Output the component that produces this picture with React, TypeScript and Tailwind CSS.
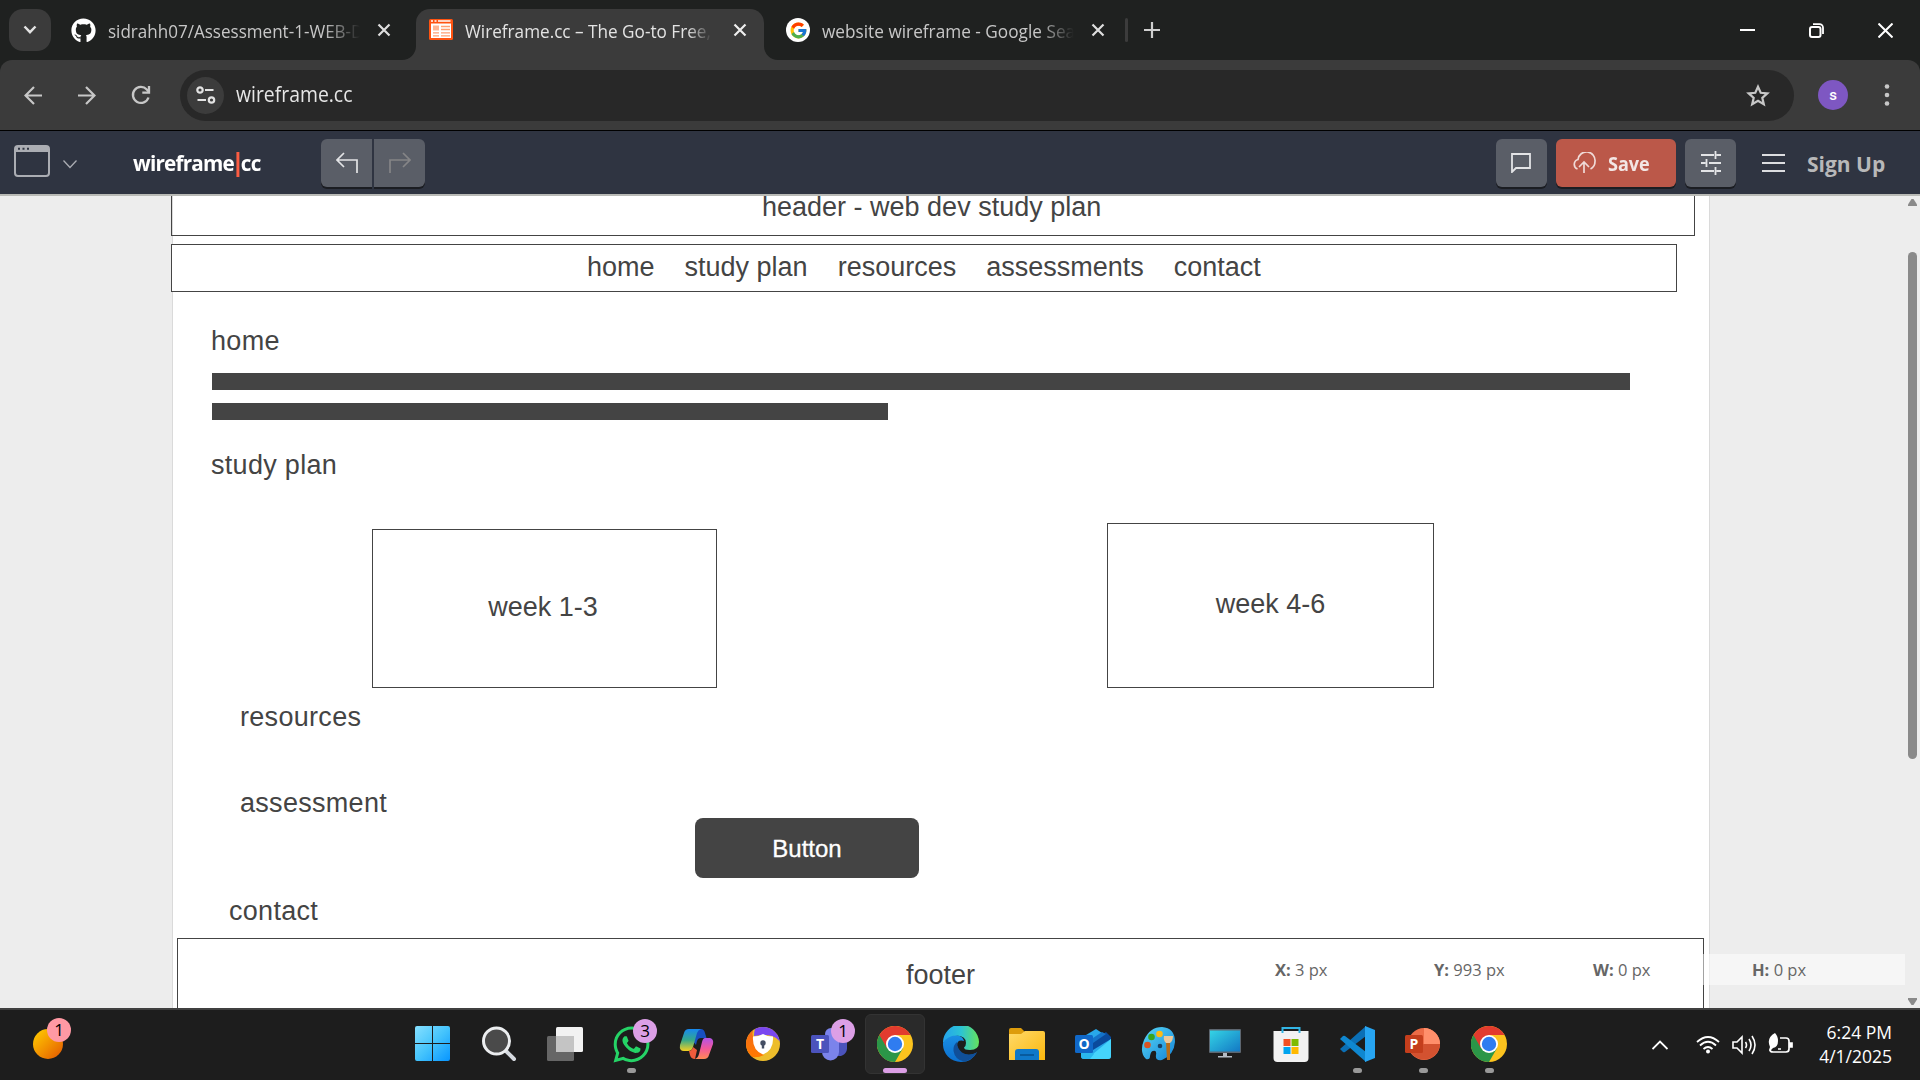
import React from "react";
import { FaGithub, FaWhatsapp } from "react-icons/fa";
import { FcGoogle } from "react-icons/fc";

const ui = "font-['Open_Sans','Noto_Sans',sans-serif]";

function TabClose({ c }: { c: string }) {
  return (
    <svg width="14" height="14" viewBox="0 0 14 14" stroke={c} strokeWidth="2.2">
      <path d="M1.5 1.5l11 11M12.5 1.5l-11 11" />
    </svg>
  );
}

function TabStrip() {
  return (
    <div className="relative flex h-[60px] items-start bg-[#1f2120]">
      <div className="mt-[9px] ml-[9px] flex h-[42px] w-[42px] items-center justify-center rounded-[14px] bg-[#3b3b3b]">
        <svg width="14" height="10" viewBox="0 0 14 10" fill="none" stroke="#e3e3e3" strokeWidth="2.4">
          <path d="M1.5 1.5L7 7.2l5.500-5.700" />
        </svg>
      </div>
      <div className="flex h-[60px] w-[365px] items-center pl-[20px]">
        <FaGithub size={25} color="#fff" />
        <div className="mt-[3px] ml-[12px] w-[252px] overflow-hidden text-[18px] whitespace-nowrap text-[#c7c7c7] [mask-image:linear-gradient(to_right,#000_86%,transparent)]">
          <span className="inline-block origin-left scale-x-[.947]">sidrahh07/Assessment-1-WEB-DEV</span>
        </div>
        <div className="ml-[17px]"><TabClose c="#dedede" /></div>
      </div>
      <div className="relative mt-[9px] flex h-[51px] w-[348px] items-center rounded-t-[14px] bg-[#3b3b3b] pb-[9px] pl-[13px]">
        <svg className="absolute bottom-0 -left-[14px]" width="14" height="14"><path d="M14 0v14H0A14 14 0 0 0 14 0" fill="#3b3b3b" /></svg>
        <svg className="absolute -right-[14px] bottom-0" width="14" height="14"><path d="M0 0v14h14A14 14 0 0 1 0 0" fill="#3b3b3b" /></svg>
        <svg width="24" height="22" viewBox="0 0 24 22">
          <rect width="24" height="21" rx="1.500" fill="#ff5310" />
          <path d="M2 2h2M5.500 2h2M9 2h12.500" stroke="#fff" strokeWidth="1.500" />
          <rect x="2" y="4.500" width="20" height="14.500" fill="#fff" />
          <rect x="4" y="6.500" width="6" height="5" fill="#ffb592" />
          <path d="M12 7.500h9M12 10.500h9M4 13.800h6M12 13.800h9M4 16.800h6M12 16.800h9" stroke="#ff9e72" strokeWidth="1.300" />
        </svg>
        <div className="mt-[3px] ml-[12px] w-[247px] overflow-hidden text-[18px] whitespace-nowrap text-[#e3e3e3] [mask-image:linear-gradient(to_right,#000_90%,transparent)]">
          <span className="inline-block origin-left scale-x-[.953]">Wireframe.cc – The Go-to Free, Online</span>
        </div>
        <div className="ml-[21px]"><TabClose c="#eee" /></div>
      </div>
      <div className="flex h-[60px] items-center pl-[22px]">
        <div className="flex h-[24px] w-[24px] items-center justify-center rounded-full bg-white"><FcGoogle size={19} /></div>
        <div className="mt-[3px] ml-[12px] w-[252px] overflow-hidden text-[18px] whitespace-nowrap text-[#c7c7c7] [mask-image:linear-gradient(to_right,#000_86%,transparent)]">
          <span className="inline-block origin-left scale-x-[.957]">website wireframe - Google Search</span>
        </div>
        <div className="ml-[17px]"><TabClose c="#dedede" /></div>
        <div className="ml-[20px] h-[24px] w-[3px] rounded bg-[#3c3c3c]" />
        <svg className="ml-[16px]" width="16" height="16" stroke="#cfcfcf" strokeWidth="2.200"><path d="M8 0v16M0 8h16" /></svg>
      </div>
      <div className="ml-auto flex h-[60px] items-center gap-[54px] pr-[27px]">
        <svg width="15" height="15" stroke="#fff" strokeWidth="2"><path d="M0 7h15" /></svg>
        <svg width="15" height="15" fill="none" stroke="#fff" strokeWidth="2"><rect x="1" y="4" width="10.500" height="10" rx="2" /><path d="M4 1.200h6.500a3.500 3.500 0 0 1 3.500 3.500V11" strokeWidth="1.800" /></svg>
        <svg width="15" height="15" stroke="#fff" strokeWidth="2"><path d="M.5.500l14 14M14.500.500l-14 14" /></svg>
      </div>
    </div>
  );
}

function Toolbar() {
  return (
    <div className="h-[70px] bg-[#1f2120]">
      <div className="flex h-[70px] items-center rounded-t-[12px] bg-[#3b3b3b]">
        <svg className="ml-[24px]" width="19" height="19" viewBox="0 0 19 19" fill="none" stroke="#c7c7c7" strokeWidth="2.200"><path d="M18 9.500H2M10 1L1.500 9.500 10 18" /></svg>
        <svg className="ml-[34px]" width="19" height="19" viewBox="0 0 19 19" fill="none" stroke="#c7c7c7" strokeWidth="2.200"><path d="M1 9.500h16M9 1l8.500 8.500L9 18" /></svg>
        <svg className="ml-[35px]" width="20" height="20" viewBox="0 0 20 20" fill="none" stroke="#c7c7c7" strokeWidth="2.300"><path d="M17.500 12.500A8 8 0 1 1 15.800 4.500L18 7" /><path d="M18 1v6.700h-6.700" /></svg>
        <div className="ml-[29px] flex h-[51px] w-[1614px] items-center rounded-full bg-[#282828] pl-[7px]">
          <div className="flex h-[37px] w-[37px] items-center justify-center rounded-full bg-[#3c3c3c]">
            <svg width="20" height="18" viewBox="0 0 20 18" fill="none" stroke="#e3e3e3" strokeWidth="2.200"><circle cx="4" cy="4" r="2.700" /><path d="M9 4h8.500M1.500 14h8.500" /><circle cx="15.500" cy="14" r="2.700" /></svg>
          </div>
          <span className="ml-[12px] origin-left scale-x-[.923] text-[21px] text-[#e6e6e6]">wireframe.cc</span>
          <svg className="mr-[24px] ml-auto" width="24" height="23" viewBox="0 0 24 23" fill="none" stroke="#c7c7c7" strokeWidth="2.200"><path d="M12 2.800l2.700 6 6.600.600-5 4.400 1.500 6.500L12 16.800l-5.800 3.500 1.500-6.500-5-4.400 6.600-.600z" /></svg>
        </div>
        <div className="ml-[24px] flex h-[30px] w-[30px] items-center justify-center rounded-full bg-[#7e57c2] font-[Roboto,sans-serif] text-[15px] font-medium text-white">s</div>
        <svg className="ml-[36px]" width="6" height="22" fill="#c7c7c7"><circle cx="3" cy="2.500" r="2.300" /><circle cx="3" cy="11" r="2.300" /><circle cx="3" cy="19.500" r="2.300" /></svg>
      </div>
    </div>
  );
}

const tool = "flex h-[48px] items-center justify-center bg-[#5a5e67] shadow-[0_2px_0_#1b1d22]";

function AppBar() {
  return (
    <div className="flex h-[64px] items-start border-t border-black bg-[#2f3441] pt-[8px]">
      <svg className="mt-[6px] ml-[14px]" width="36" height="32" viewBox="0 0 36 32" fill="none"><rect x="1" y="1" width="34" height="30" rx="3" stroke="#abadb3" strokeWidth="2" /><path d="M1 4q0-3 3-3h28q3 0 3 3v3H1z" fill="#abadb3" /><path d="M4 3.700h2M8.500 3.700h2M13 3.700h2" stroke="#2f3441" strokeWidth="2" /></svg>
      <svg className="mt-[21px] ml-[13px]" width="14" height="9" fill="none" stroke="#abadb3" strokeWidth="1.300"><path d="M.5.500L7 7.500 13.500.500" /></svg>
      <div className="ml-[56px] flex h-[48px] w-[188px] items-center pt-[2px] text-[21px] font-bold text-white">
        <span className="flex origin-left scale-x-[.985] items-center tracking-[-0.800px]">wireframe<i className="mx-[2px] h-[25px] w-[3px] bg-[#fb5c42]" />cc</span>
      </div>
      <div className={`${tool} w-[51px] rounded-l-[6px]`}>
        <svg width="22" height="22" fill="none" stroke="#e3e4e6" strokeWidth="1.700"><path d="M8 1L1 8l7 7M1 8h20v13" /></svg>
      </div>
      <div className={`${tool} ml-[2px] w-[51px] rounded-r-[6px]`}>
        <svg width="22" height="22" fill="none" stroke="#858587" strokeWidth="1.700"><path d="M14 1l7 7-7 7M21 8H1v13" /></svg>
      </div>
      <div className="ml-auto flex">
        <div className={`${tool} w-[51px] rounded-[6px]`}>
          <svg className="-ml-[1px]" width="20" height="20" fill="none" stroke="#e3e4e6" strokeWidth="1.800"><path d="M1 1h18v14H5l-4 4z" /></svg>
        </div>
        <div className="ml-[9px] flex h-[48px] w-[120px] items-center rounded-[6px] bg-[#bb5849] pl-[16px] text-[19px] font-bold text-[#f3e6e4] shadow-[0_2px_0_#1b1d22]">
          <svg width="25" height="22" fill="none" stroke="#f0dad7" strokeWidth="1.700"><path d="M5.500 17A5 5 0 0 1 6 7.500 8.500 8.500 0 0 1 23 9.500c0 3-1.500 6-4.500 7.500M12 21V10.500M7 15l5-5 5 5" /></svg>
          <span className="mt-[2px] ml-[11px] origin-left scale-x-[.95]">Save</span>
        </div>
        <div className={`${tool} ml-[9px] w-[51px] rounded-[6px]`}>
          <svg width="20" height="24" fill="none" stroke="#e3e4e6" strokeWidth="1.800"><path d="M0 4h13M15.500 4H20M14.500 0v8M0 12h4.500M8 12h12M5.500 8v8M0 20h13M15.500 20H20M14.500 16v8" /></svg>
        </div>
        <svg className="mt-[14px] ml-[26px]" width="23" height="20" stroke="#dcdde0" strokeWidth="2"><path d="M0 2h23M0 10h23M0 18h23" /></svg>
        <span className="mt-[10px] mr-[33px] ml-[22px] w-[80px] origin-left text-[21px] font-bold whitespace-nowrap text-[#b8b8b9]">Sign Up</span>
      </div>
    </div>
  );
}

function Label({ at, children }: { at: string; children: string }) {
  return <div className={`absolute text-[27px] leading-[30px] whitespace-nowrap ${at}`}>{children}</div>;
}

function Canvas() {
  return (
    <div className="relative h-[814px] overflow-hidden bg-[#ededed] font-['Liberation_Sans',Arial,sans-serif] text-[#444]">
      <div className="absolute top-0 left-[172px] h-full w-[1538px] border-x border-[#dadada] bg-white" />
      <div className="absolute -top-[10px] left-[171px] h-[52px] w-[1524px] border border-[#444]" />
      <div className="absolute top-[50px] left-[171px] h-[48px] w-[1506px] border border-[#444] bg-white" />
      <Label at="top-[-2px] left-[762px]">header - web dev study plan</Label>
      <div className="absolute top-[58px] left-[587px] flex gap-[30px] text-[27px] leading-[30px] whitespace-nowrap">
        <span>home</span><span>study plan</span><span>resources</span><span>assessments</span><span>contact</span>
      </div>
      <Label at="top-[132px] left-[211px] tracking-[.3px]">home</Label>
      <div className="absolute top-[179px] left-[212px] h-[17px] w-[1418px] bg-[#444]" />
      <div className="absolute top-[209px] left-[212px] h-[17px] w-[676px] bg-[#444]" />
      <Label at="top-[256px] left-[211px] tracking-[.3px]">study plan</Label>
      <div className="absolute top-[335px] left-[372px] flex h-[159px] w-[345px] items-center justify-center border border-[#444] pr-[3px] pb-[2px] text-[27px]">week 1-3</div>
      <div className="absolute top-[329px] left-[1107px] flex h-[165px] w-[327px] items-center justify-center border border-[#444] pb-[2px] text-[27px]">week 4-6</div>
      <Label at="top-[508px] left-[240px] tracking-[.3px]">resources</Label>
      <Label at="top-[594px] left-[240px] tracking-[.3px]">assessment</Label>
      <div className="absolute top-[624px] left-[695px] flex h-[60px] w-[224px] items-center justify-center rounded-[8px] bg-[#444] pt-[2px] text-[24px] text-white [-webkit-text-stroke:.3px_#fff]">Button</div>
      <Label at="top-[702px] left-[229px] tracking-[.3px]">contact</Label>
      <div className="absolute top-[744px] left-[177px] h-[100px] w-[1527px] border border-[#444] bg-white" />
      <Label at="top-[766px] left-[906px]">footer</Label>
      <div className={`absolute top-[760px] left-[1256px] flex h-[31px] w-[649px] items-center bg-white/50 pt-[2px] pl-[1px] text-[16.500px] text-[#666] ${ui}`}>
        <span className="w-[159px] pl-[18px]"><b>X:</b> 3 px</span>
        <span className="w-[159px] pl-[18px]"><b>Y:</b> 993 px</span>
        <span className="w-[159px] pl-[18px]"><b>W:</b> 0 px</span>
        <span className="pl-[18px]"><b>H:</b> 0 px</span>
      </div>
      <div className="absolute top-0 left-0 h-[2px] w-full bg-[#b9bab6]" />
      <svg className="absolute top-[5px] right-[3px]" width="9" height="7" fill="#8a8a8a"><path d="M0 7V5.500L3.500 0h2L9 5.500V7z" /></svg>
      <div className="absolute top-[58px] right-[3px] h-[507px] w-[9px] rounded-full bg-[#8a8a8a]" />
      <svg className="absolute right-[3px] bottom-[3px]" width="9" height="7" fill="#8a8a8a"><path d="M0 0v1.500L3.500 7h2L9 1.500V0z" /></svg>
    </div>
  );
}

function Chrome() {
  return (
    <svg width="36" height="36" viewBox="0 0 36 36">
      <circle cx="18" cy="18" r="18" fill="#fcc31e" />
      <path d="M18 18L2.400 9A18 18 0 0 0 18 36l7.800-13.500z" fill="#2b9648" />
      <path d="M2.400 9A18 18 0 0 1 33.600 9H18l-7.800 13.500z" fill="#e23b2e" />
      <circle cx="18" cy="18" r="9" fill="#fff" /><circle cx="18" cy="18" r="7.200" fill="#2f7cf0" />
    </svg>
  );
}

function Badge({ n, bg, at }: { n: string; bg: string; at: string }) {
  return <div className={`absolute flex h-[24px] w-[24px] items-center justify-center rounded-full text-[17px] text-black ${bg} ${at}`}>{n}</div>;
}

const icons: React.ReactNode[] = [
  <svg width="36" height="36"><defs><linearGradient id="win" x2="1" y2="1"><stop stopColor="#86e0ff" /><stop offset=".5" stopColor="#45c4fc" /><stop offset="1" stopColor="#0795ff" /></linearGradient></defs><path d="M2 0h15v17H0V2q0-2 2-2zM18 0h15q2 0 2 2v15H18zM0 18h17v17H2q-2 0-2-2zM18 18h17v15q0 2-2 2H18z" fill="url(#win)" /></svg>,
  <svg width="36" height="36" fill="none"><path d="M25 25l8 8" stroke="#d5d9df" strokeWidth="4" strokeLinecap="round" /><circle cx="15.500" cy="15" r="13" fill="#4a4a4a" stroke="#eceef0" strokeWidth="3" /></svg>,
  <svg width="36" height="36"><rect y="10" width="27" height="25" rx="1.500" fill="#666" /><rect x="9" y="1" width="27" height="25" rx="1.500" fill="#f2f2f2" /><path d="M9 10h18v16H9z" fill="#c4c4c4" /></svg>,
  <FaWhatsapp size={41} color="#25d366" />,
  <svg width="36" height="36" viewBox="0 0 36 36"><defs><linearGradient id="cpA" x2="0" y2="1"><stop stopColor="#1788f0" /><stop offset=".5" stopColor="#35a98a" /><stop offset="1" stopColor="#f5cf21" /></linearGradient><linearGradient id="cpB" x2="0" y2="1"><stop stopColor="#b354e8" /><stop offset=".5" stopColor="#f2589b" /><stop offset="1" stopColor="#ff8a54" /></linearGradient></defs><path d="M22 3q3 0 4 4l1.500 5H22q-3 0-4 3l-1 4-5-6 3-10z" fill="#174fc1" /><path d="M10 3h12q-3 1-4 4l-4 14q-1 4-5 4H5q-5 0-4-6L5 7q1-4 5-4z" fill="url(#cpA)" /><path d="M10 25q3 0 4-4l4 3-2 9q-4 0-5-4z" fill="#ef5b3c" /><path d="M26 12h5q4 1 3 6l-4 11q-1 4-5 4h-9q3-1 4-5l3-12q1-4 3-4z" fill="url(#cpB)" /></svg>,
  <svg width="36" height="36" viewBox="0 0 36 36"><defs><linearGradient id="orb" x2="0" y2="1"><stop stopColor="#f36a1c" /><stop offset="1" stopColor="#ff7a00" /></linearGradient><clipPath id="orbClip"><circle cx="18" cy="18" r="17" /></clipPath></defs><g clipPath="url(#orbClip)"><path d="M0 0h36v36H0z" fill="#edbd2b" /><path d="M10 0q-5 8 0 15 2 10 9 14-6 3-12 2L0 24V4z" fill="url(#orb)" /><path d="M8 0h22l7 18q-4-6-10-8T9 10q0-5 2-10z" fill="#7a47f0" /></g><path d="M18 8q4 2.500 10 2.500Q29 24 18 28.500 7 24 8 10.500q6 0 10-2.500z" fill="#fff" /><circle cx="18" cy="17" r="2.700" fill="#444e63" /><path d="M16.800 17h2.400v5.500h-2.400z" fill="#444e63" /></svg>,
  <svg width="36" height="36" viewBox="0 0 36 36"><circle cx="20" cy="8" r="6" fill="#7b83eb" /><path d="M22 14h14v9a8 8 0 0 1-12 6z" fill="#4b53bc" /><path d="M11 12h17v14a8.500 8.500 0 0 1-17 0z" fill="#7b83eb" /><rect y="9" width="18" height="18" rx="1.500" fill="#4b53bc" /><text x="9" y="23" textAnchor="middle" fontFamily="Open Sans" fontSize="14" fontWeight="700" fill="#fff">T</text></svg>,
  <Chrome />,
  <svg width="36" height="36" viewBox="0 0 36 36"><defs><linearGradient id="edA"><stop stopColor="#24a3ee" /><stop offset=".5" stopColor="#2cc3d4" /><stop offset="1" stopColor="#65e25c" /></linearGradient><linearGradient id="edB" x2="0" y2="1"><stop stopColor="#1b8fe4" /><stop offset="1" stopColor="#0b6fcf" /></linearGradient></defs><path d="M0 17Q4 8 13 9q7 1 8 6-7-2-7 5 2 9 12 9 5 0 8-3-5 10-16 10A18 18 0 0 1 0 17z" fill="url(#edB)" /><path d="M0 17A18 18 0 0 1 36 16q0 8-9 8-6 0-6-2.500 2-1.500 2-4.500 0-7-9-7.500Q5 9 0 17z" fill="url(#edA)" /><path d="M14 16q-4 3-3.500 9Q12 34 21 35.500q8-1 13-9-9 4-15 0-5-4-5-10.500z" fill="#104f99" /></svg>,
  <svg width="36" height="36" viewBox="0 0 36 36"><defs><linearGradient id="fo" x2="1" y2="1"><stop stopColor="#ffda6a" /><stop offset="1" stopColor="#fbb70d" /></linearGradient></defs><path d="M0 4q0-2 2-2h10l4 4v4H0z" fill="#dd9c0c" /><path d="M0 8h12l4-3h18q2 0 2 2v27H0z" fill="url(#fo)" /><path d="M6 34V26q0-3 3-3h18q3 0 3 3v8z" fill="#0f78c9" /><path d="M11 29h14" stroke="#07508e" strokeWidth="1.500" /></svg>,
  <svg width="36" height="36" viewBox="0 0 36 36"><path d="M6 12L21 3l15 10v17q0 3-3 3H9q-3 0-3-3z" fill="#28a8ea" /><path d="M18 15L31 6l5 5v2L18 24z" fill="#0a4a9c" /><path d="M18 12l9-6 4 2-13 9z" fill="#1473c9" /><path d="M36 13v17q0 3-3 3H12z" fill="#45d4fc" /><path d="M6 21l13 7-4 5H9q-3 0-3-3z" fill="#2ab7ee" /><rect y="9" width="18" height="18" rx="1.500" fill="#1068c8" /><text x="9" y="23" textAnchor="middle" fontFamily="Open Sans" fontSize="14" fontWeight="700" fill="#fff">O</text></svg>,
  <svg width="36" height="36" viewBox="0 0 36 36"><defs><linearGradient id="pa" x2="1" y2="1"><stop stopColor="#58d9f8" /><stop offset="1" stopColor="#1583d5" /></linearGradient></defs><path d="M5 33q-7-7-2-19Q9 1 21 1q13 1 13 15-1 13-13 18-7 1-6-5 1-5-3-4-2 0-3 5 0 4-4 3z" fill="url(#pa)" /><circle cx="6.500" cy="19" r="3.300" fill="#d95423" /><circle cx="10.500" cy="11" r="3.300" fill="#37a51f" /><circle cx="18.500" cy="8" r="3.300" fill="#fdbb15" /><circle cx="19" cy="20" r="2.300" fill="#174064" /><path d="M25 16h4v18h-3z" fill="#b76c17" /><path d="M23 10h9q0 5-3 7h-4q-3-3-2-7z" fill="#ebc89a" /></svg>,
  <svg width="36" height="36" viewBox="0 0 36 36"><defs><linearGradient id="mo" x2="1" y2="1"><stop stopColor="#34d4e5" /><stop offset="1" stopColor="#1378c4" /></linearGradient></defs><rect x="2" y="3" width="32" height="24" rx="1" fill="#5d6670" /><rect x="3" y="4.500" width="30" height="21" fill="url(#mo)" /><path d="M16 27h4v3h5v1.500H11V30h5z" fill="#b4bcc4" /></svg>,
  <svg width="36" height="36" viewBox="0 0 36 36"><path d="M.5 5h35v27q0 4-4 4h-27q-4 0-4-4z" fill="#f2f2f2" /><path d="M9.500 7V2h17v5" fill="none" stroke="#32b5e5" strokeWidth="2" /><path d="M10.500 13h7v7h-7z" fill="#f25022" /><path d="M18.500 13h7v7h-7z" fill="#7fba00" /><path d="M10.500 21h7v7h-7z" fill="#00a4ef" /><path d="M18.500 21h7v7h-7z" fill="#ffb900" /></svg>,
  <svg width="36" height="36" viewBox="0 0 36 36"><path d="M1 23l3 3q1 .500 2 0L27 10V0L1 23z" fill="#0b6fb5" /><path d="M1 13l3-3q1-.500 2 0l21 16v10L1 13z" fill="#0f87d0" /><path d="M26 0l10 4v28l-10 4z" fill="#27a5f2" /></svg>,
  <svg width="36" height="36" viewBox="0 0 36 36"><circle cx="19" cy="18" r="16" fill="#ed6c47" /><path d="M19 2a16 16 0 0 1 16 16H19z" fill="#ff8f6b" /><path d="M35 18a16 16 0 0 1-31 5l15-5z" fill="#d35230" /><rect y="9" width="18" height="18" rx="1.500" fill="#c43e1c" /><text x="9" y="23" textAnchor="middle" fontFamily="Open Sans" fontSize="14" fontWeight="700" fill="#fff">P</text></svg>,
  <Chrome />,
];

const running = [3, 14, 15, 16];

function Taskbar() {
  return (
    <div className="flex h-[72px] items-start border-t-2 border-[#404040] bg-[#1d1d1d]">
      <div className="relative mt-[19px] ml-[33px] h-[30px] w-[30px] rounded-full bg-linear-to-br from-[#ffd000] to-[#e05200]">
        <Badge n="1" bg="bg-[#ff99a4]" at="-top-[11px] left-[14px]" />
      </div>
      <div className="mt-[4px] ml-[340px] flex gap-[6px]">
        {icons.map((icon, i) => (
          <div key={i} className={`relative flex h-[60px] w-[60px] items-center justify-center rounded-[6px] ${i === 7 ? "border border-[#333] bg-[#2a2a2a]" : ""}`}>
            {icon}
            {i === 3 && <Badge n="3" bg="bg-[#dc9fe6]" at="top-[5px] left-[32px]" />}
            {i === 6 && <Badge n="1" bg="bg-[#dc9fe6]" at="top-[5px] left-[32px]" />}
            {running.includes(i) && <i className="absolute bottom-[1px] h-[5px] w-[9px] rounded-full bg-[#999]" />}
            {i === 7 && <i className="absolute bottom-0 h-[5px] w-[24px] rounded-full bg-[#dc9fe6]" />}
          </div>
        ))}
      </div>
      <div className="ml-auto flex h-[70px] items-center pr-[28px] text-white">
        <svg width="16" height="10" fill="none" stroke="#fff" strokeWidth="1.800"><path d="M.5 9L8 1.500 15.500 9" /></svg>
        <svg className="ml-[28px]" width="24" height="18" viewBox="0 0 24 18" fill="none" stroke="#fff" strokeWidth="1.800"><path d="M1 6Q12-4 23 6M4 9.500q8-7.500 16 0M7.500 13q4.500-4 9 0" /><circle cx="12" cy="15.500" r="2" fill="#fff" stroke="none" /></svg>
        <svg className="ml-[12px]" width="25" height="20" viewBox="0 0 25 20" fill="none" stroke="#fff" strokeWidth="1.600"><path d="M1 7h4l5-5v16l-5-5H1zM13.500 7q2 3 0 6M17 4q4 6 0 12M20 1q6 9 0 18" /></svg>
        <svg className="-mt-[4px] ml-[11px]" width="25" height="21" viewBox="0 0 25 21" fill="none" stroke="#fff" strokeWidth="1.700"><path d="M12 5h6q3 0 3 3v8q0 3-3 3H5q-3 0-3-2M10 16h3" /><path d="M22 10h2v4h-2z" fill="#fff" /><path d="M7 0q3 3 3 8 0 6-5 7l-3 3-1-1 1-3Q-2 5 7 0z" fill="#fff" stroke="none" /></svg>
        <div className="mb-[2px] ml-[24px] w-[75px] text-right text-[17.500px] leading-[24px] whitespace-nowrap"><div className="-ml-[10px] origin-right">6:24 PM<br />4/1/2025</div></div>
      </div>
    </div>
  );
}

export default function App() {
  return (
    <div className={`h-[1080px] w-[1920px] overflow-hidden ${ui}`}>
      <TabStrip />
      <Toolbar />
      <AppBar />
      <Canvas />
      <Taskbar />
    </div>
  );
}
